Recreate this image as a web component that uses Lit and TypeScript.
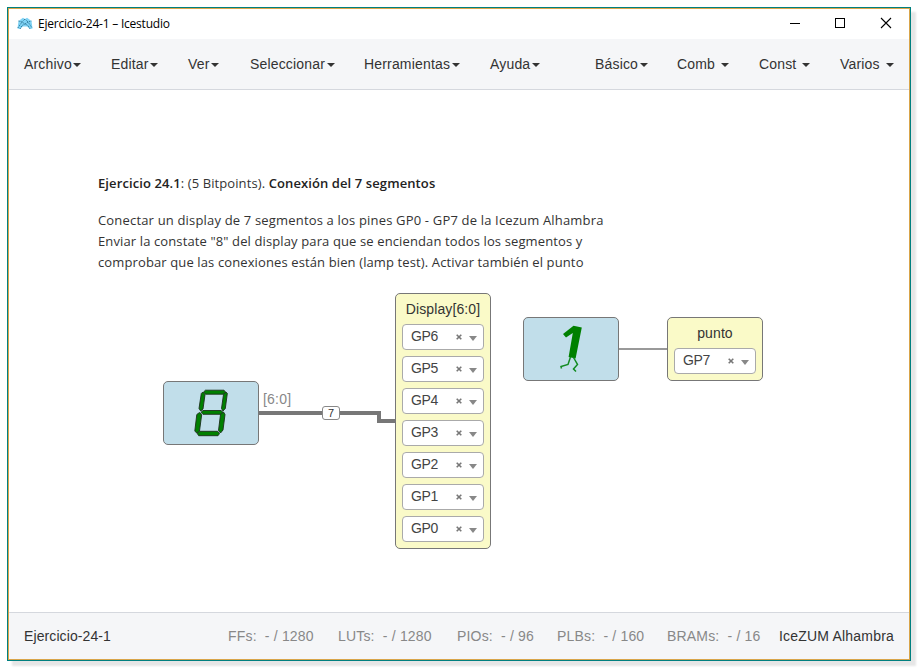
import { LitElement, html, css, svg } from "lit";
import { customElement, property } from "lit/decorators.js";

const sans = css`"Liberation Sans", Arial, sans-serif`;

@customElement("pin-select")
class PinSelect extends LitElement {
  @property() pin = "";
  static styles = css`
    :host { display: flex; box-sizing: border-box; width: 82px; height: 26px; align-items: center;
      border: 1px solid #aaa; border-radius: 4px; background: #fff; padding: 0 6px 0 8px;
      font: 14px/24px ${sans}; color: #444; }
    .name { flex: 1; margin-top: -2px; letter-spacing: -0.35px; }
    .clear { width: 6px; height: 6px; margin: 0 7px 1px 0; }
    .arrow { width: 8px; height: 5px; margin-top: 3px; }
    svg { display: block; }
  `;
  render() {
    return html`<span class="name">${this.pin}</span>
      <svg class="clear" viewBox="0 0 6 6"><path d="M.7 .7L5.3 5.3M5.3 .7L.7 5.3" stroke="#777" stroke-width="1.6" /></svg>
      <svg class="arrow" viewBox="0 0 8 5"><path d="M0 0H8L4 5Z" fill="#888" /></svg>`;
  }
}

@customElement("io-block")
class IoBlock extends LitElement {
  @property() label = "";
  @property({ type: Array }) pins: string[] = [];
  static styles = css`
    :host { display: flex; flex-direction: column; align-items: center; gap: 6px; box-sizing: border-box;
      width: 96px; padding: 6px 0 6px; background: #fafac8; border: 1px solid #777; border-radius: 5px; }
    .label { font: 14px/18px ${sans}; color: #333; letter-spacing: 0.1px; height: 18px; }
  `;
  render() {
    return html`<div class="label">${this.label}</div>
      ${this.pins.map((p) => html`<pin-select .pin=${p}></pin-select>`)}`;
  }
}

const menusLeft = ["Archivo", "Editar", "Ver", "Seleccionar", "Herramientas", "Ayuda"];
const menusRight = ["Básico", "Comb", "Const", "Varios"];
const resources = ["FFs:\u00a0 - / 1280", "LUTs:\u00a0 - / 1280", "PIOs:\u00a0 - / 96", "PLBs:\u00a0 - / 160", "BRAMs:\u00a0 - / 16"];

const segments = [
  "M40.500 11L42.500 9.200H61L62.500 11L60.500 13.200H42.500Z",
  "M39.800 11L42 13.500L40 28L37.700 30L36 27.500L38.300 12.500Z",
  "M63 11L64.300 12.500L62.300 27.500L60 30L58.500 27.500L60.500 13.500Z",
  "M38 31.300L40 29.500H58L60 31.300L58 33.300H40Z",
  "M36.500 31.500L38.700 33.500L36.500 50L33.700 52L31.800 50L33.800 33.500Z",
  "M60.500 31L62 33.500L60 49L57.500 52L55.500 49.500L57.500 33.500Z",
  "M34.200 52.300L36.500 50.300H54.500L56.500 52.500L55 54.700H35.700Z",
];

@customElement("app-root")
class AppRoot extends LitElement {
  static styles = css`
    :host { display: block; box-sizing: border-box; width: 919px; height: 669px; padding: 7px 8px 8px 7px;
      background: #fff; font-family: ${sans}; overflow: hidden; }
    .window { box-sizing: border-box; width: 904px; height: 654px; border: 1px solid #008080;
      box-shadow: 5px 5px 2px #e6e6e6; }
    .frame { box-sizing: border-box; height: 652px; border: 1px solid #d9a54a; display: flex;
      flex-direction: column; background: #fff; }
    .title { height: 30px; display: flex; align-items: center; padding-left: 8px; color: #000;
      font: 12px/30px "Open Sans", "Noto Sans", sans-serif; }
    .logo { width: 16px; height: 14px; margin-right: 5px; }
    .caption { flex: 1; letter-spacing: -0.22px; white-space: nowrap; }
    .controls { display: flex; width: 138px; }
    .controls svg { width: 46px; height: 30px; }
    .menu { box-sizing: border-box; height: 51px; background: #f5f6f8; border-bottom: 1px solid #d5d8de;
      display: grid; grid-template-columns: 87px 77px 62px 114px 126px 105px 82px 82px 81px 60px;
      padding-left: 15px; align-items: center; font-size: 14px; line-height: 20px; color: #333; letter-spacing: 0.17px; }
    .item { display: flex; align-items: center; white-space: nowrap; }
    .caret { width: 8px; height: 4px; margin: 2px 0 0 1.5px; }
    .spaced .caret { margin-left: 6px; }
    .basic .caret { margin-left: 1.5px; }
    .canvas { position: relative; flex: 1; }
    .note { position: absolute; left: 89px; top: 83px; white-space: nowrap; color: #333;
      font: 13px/21px "Open Sans", "Noto Sans", sans-serif; letter-spacing: 0.12px; }
    .note b { font-weight: 600; color: #222; }
    .heading { margin-bottom: 16px; letter-spacing: 0.1px; }
    .first { letter-spacing: 0.175px; }
    .wires { position: absolute; left: 0; top: 0; width: 900px; height: 522px; }
    .const { position: absolute; box-sizing: border-box; width: 96px; height: 64px; background: #c1deea;
      border: 1px solid #777; border-radius: 5px; }
    .const svg { display: block; width: 96px; height: 64px; margin: -1px; }
    .eight { left: 154px; top: 291px; }
    .one { left: 514px; top: 227px; }
    .display { position: absolute; left: 386px; top: 203px; height: 256px; }
    .punto { position: absolute; left: 658px; top: 227px; height: 64px; }
    .bus { position: absolute; left: 254px; top: 301px; font-size: 14px; line-height: 16px; color: #888; letter-spacing: 0.2px; }
    .size { position: absolute; left: 313px; top: 316px; box-sizing: border-box; width: 18px; height: 14px;
      border: 1px solid #888; border-radius: 3px; background: #fff; color: #333; text-align: center; font-size: 11px; line-height: 13px; }
    .status { box-sizing: border-box; height: 47px; background: #f5f6f8; border-top: 1px solid #d5d8de;
      display: grid; grid-template-columns: 204px 110px 119px 100px 110px 112px 1fr; padding-left: 15px;
      align-items: center; font-size: 14px; line-height: 20px; color: #888; white-space: pre; letter-spacing: 0.1px; }
    .count { letter-spacing: 0.18px; }
    .strong { color: #333; }
    .board { letter-spacing: 0.2px; }
  `;

  caret() {
    return html`<svg class="caret" viewBox="0 0 8 4"><path d="M0 0H8L4 4Z" fill="#333" /></svg>`;
  }

  render() {
    return html`<div class="window"><div class="frame">
      <div class="title">
        <svg class="logo" viewBox="0 0 16 14">
          <path d="M1.500 4L6 .8L8 2L10 .8L14.500 4L15.500 11.500L13 12L10 9.500H6L3 12L.5 11.500Z" fill="#7fd3f5" />
          <path d="M1.500 4L5 5L8 2L11 5L14.500 4M.8 11L5 5L8 7L11 5L15.200 11M3 12L5 8.500L8 7L11 8.500L13 12" fill="none" stroke="#286f91" stroke-width=".9" stroke-dasharray="1.300 .9" />
        </svg>
        <span class="caption">Ejercicio-24-1 – Icestudio</span>
        <div class="controls">
          <svg viewBox="0 0 46 30"><path d="M19 14.500H29" stroke="#000" /></svg>
          <svg viewBox="0 0 46 30"><rect x="18.500" y="9.500" width="9" height="9" fill="none" stroke="#000" /></svg>
          <svg viewBox="0 0 46 30"><path d="M18 9L28 19M28 9L18 19" stroke="#000" stroke-width="1.100" /></svg>
        </div>
      </div>
      <nav class="menu">
        ${menusLeft.map((m) => html`<div class="item">${m}${this.caret()}</div>`)}
        ${menusRight.map((m, i) => html`<div class="item ${i ? "spaced" : "basic"}">${m}${this.caret()}</div>`)}
      </nav>
      <main class="canvas">
        <div class="note">
          <div class="heading"><b>Ejercicio 24.1</b>: (5 Bitpoints). <b>Conexión del 7 segmentos</b></div>
          <div class="first">Conectar un display de 7 segmentos a los pines GP0 - GP7 de la Icezum Alhambra</div>
          <div>Enviar la constate "8" del display para que se enciendan todos los segmentos y</div>
          <div>comprobar que las conexiones están bien (lamp test). Activar también el punto</div>
        </div>
        <svg class="wires" viewBox="0 0 900 522" fill="none" stroke="#777">
          <path d="M250 323H370V331H386" stroke-width="4" />
          <path d="M610 259H658" stroke-width="2" stroke="#999" />
        </svg>
        <div class="bus">[6:0]</div>
        <div class="size">7</div>
        <div class="const eight"><svg viewBox="0 0 96 64">
          ${segments.map((d) => svg`<path d=${d} fill="#008000" stroke="#1c2f1c" stroke-width=".9" />`)}
        </svg></div>
        <div class="const one"><svg viewBox="0 0 96 64">
          <path d="M50.500 8.800L58.800 10.500L52.600 41.500L45.600 40L49.800 16L43 20.500L40 17Z" fill="#008000" />
          <path d="M47.500 40L45 47.500L38 49.500L38.500 51.500M50.500 40.500L54.500 47.500L50.500 52L53 54.500" fill="none" stroke="#128a20" stroke-width="1.500" />
        </svg></div>
        <io-block class="display" label="Display[6:0]" .pins=${["GP6", "GP5", "GP4", "GP3", "GP2", "GP1", "GP0"]}></io-block>
        <io-block class="punto" label="punto" .pins=${["GP7"]}></io-block>
      </main>
      <footer class="status">
        <span class="strong">Ejercicio-24-1</span>
        ${resources.map((r) => html`<span class="count">${r}</span>`)}
        <span class="strong board">IceZUM Alhambra</span>
      </footer>
    </div></div>`;
  }
}
